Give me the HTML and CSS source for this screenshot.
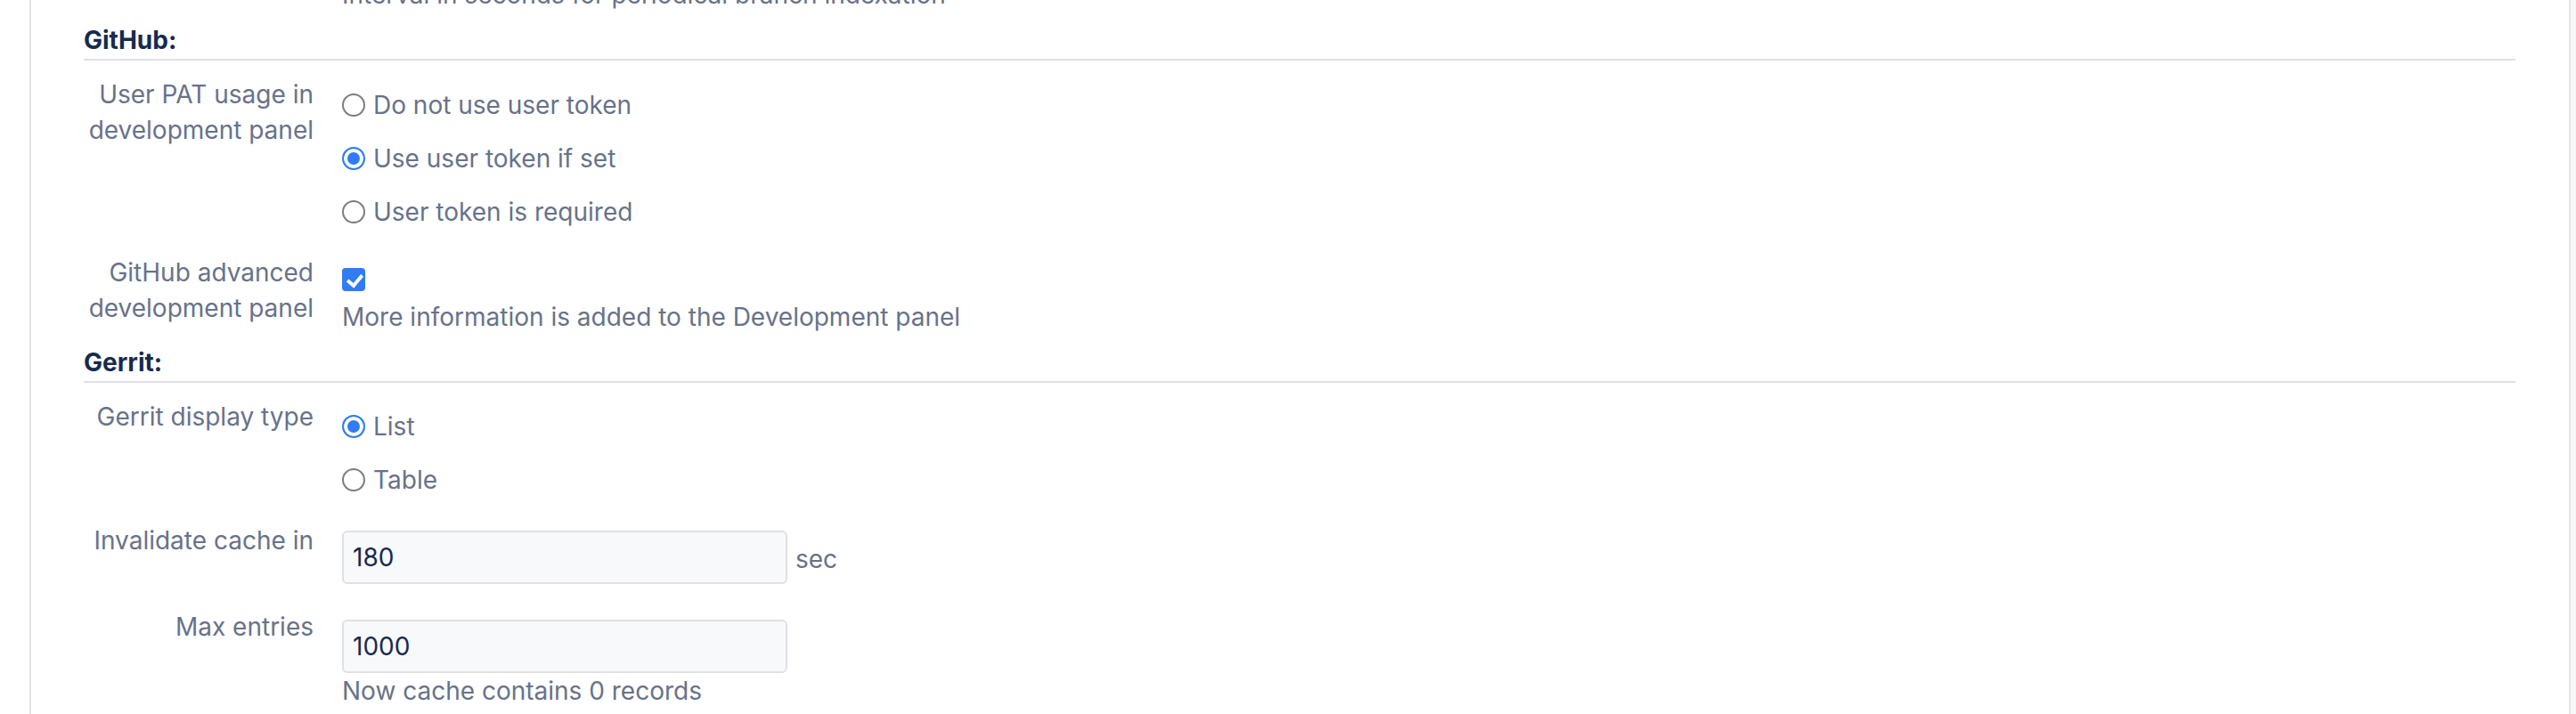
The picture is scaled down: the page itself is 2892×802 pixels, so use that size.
FILE: index.html
```html
<!DOCTYPE html>
<html lang="en">
<head>
<meta charset="utf-8">
<title>Settings</title>
<link rel="stylesheet" href="styles.css">
</head>
<body>
<div class="app">
  <div class="gutter"></div>
  <main class="panel">
    <div class="content">
      <div class="row row-first">
        <div class="label"></div>
        <div class="field"><div class="desc">Interval in seconds for periodical branch indexation</div></div>
      </div>

      <h3 class="section">GitHub:</h3>

      <div class="row">
        <div class="label">User PAT usage in development panel</div>
        <div class="field field-radios">
          <label class="radio"><input type="radio" name="pat"><span>Do not use user token</span></label>
          <label class="radio"><input type="radio" name="pat" checked><span>Use user token if set</span></label>
          <label class="radio"><input type="radio" name="pat"><span>User token is required</span></label>
        </div>
      </div>

      <div class="row">
        <div class="label">GitHub advanced development panel</div>
        <div class="field field-check">
          <div class="check-line"><input type="checkbox" class="checkbox" checked></div>
          <div class="desc desc-check">More information is added to the Development panel</div>
        </div>
      </div>

      <h3 class="section">Gerrit:</h3>

      <div class="row">
        <div class="label">Gerrit display type</div>
        <div class="field field-radios field-radios-b">
          <label class="radio"><input type="radio" name="gdt" checked><span>List</span></label>
          <label class="radio"><input type="radio" name="gdt"><span>Table</span></label>
        </div>
      </div>

      <div class="row row-input">
        <div class="label">Invalidate cache in</div>
        <div class="field field-input">
          <div class="input-line"><input class="text" type="text" value="180"><span class="unit">sec</span></div>
        </div>
      </div>

      <div class="row row-input2">
        <div class="label">Max entries</div>
        <div class="field field-input field-input2">
          <div class="input-line"><input class="text" type="text" value="1000"></div>
          <div class="desc">Now cache contains 0 records</div>
        </div>
      </div>
    </div>
  </main>
  <div class="scrollstrip"></div>
</div>
</body>
</html>
```

FILE: styles.css
```css
* { box-sizing: border-box; }

html, body {
  margin: 0;
  padding: 0;
  background: #ffffff;
}

body {
  font-family: Inter, "Noto Sans", "Liberation Sans", sans-serif;
  font-size: 28px;
  line-height: 40px;
  color: #67728a;
  overflow: hidden;
}

.app {
  display: flex;
  min-height: 100vh;
}

.gutter {
  width: 33px;
  flex: none;
}

.panel {
  flex: 1;
  border-left: 2px solid #e4e4e8;
  border-right: 2px solid #e4e4e8;
  padding: 0 60px 0 59px;
  overflow: hidden;
}

.scrollstrip {
  width: 6px;
  flex: none;
  background: #f7f7f8;
}

.content {
  margin-top: -26px;
}

.section {
  margin: 11px 0 18px;
  padding-bottom: 1px;
  border-bottom: 2px solid #e1e1e7;
  font-size: 28px;
  line-height: 40px;
  font-weight: 700;
  color: #172b4d;
}

.row {
  display: flex;
  margin-top: 28px;
}

.row-first { margin-top: 0; }

.section + .row { margin-top: 0; }

.label {
  width: 258px;
  flex: none;
  text-align: right;
  color: #67728a;
}

.field {
  padding-left: 32px;
  flex: 1;
  min-width: 0;
}

.desc {
  color: #67728a;
  white-space: nowrap;
}

.field-radios {
  padding-top: 12px;
  display: flex;
  flex-direction: column;
  gap: 20px;
}

.field-radios-b { padding-top: 11px; }

.radio {
  display: flex;
  align-items: center;
  height: 40px;
  gap: 9px;
  color: #67728a;
}

.radio input {
  appearance: none;
  -webkit-appearance: none;
  margin: 0;
  width: 26px;
  height: 26px;
  border-radius: 50%;
  border: 2px solid #7d7d7d;
  background: #ffffff;
  flex: none;
}

.radio input:checked {
  border-color: #2f7cf6;
  background: #2f7cf6;
  box-shadow: inset 0 0 0 4px #ffffff;
}

.field-check { padding-top: 8px; }

.check-line {
  height: 40px;
  display: flex;
  align-items: center;
}

.checkbox {
  appearance: none;
  -webkit-appearance: none;
  margin: 0;
  width: 26px;
  height: 26px;
  border-radius: 4px;
  background: #2f7cf6;
  position: relative;
}

.checkbox::after {
  content: "";
  position: absolute;
  left: 9px;
  top: 4px;
  width: 7px;
  height: 13px;
  border: solid #ffffff;
  border-width: 0 4px 4px 0;
  transform: rotate(40deg);
}

.desc-check { margin-top: 2px; }

.field-input { padding-top: 9px; }
.field-input2 { padding-top: 12px; }

.input-line {
  display: flex;
  align-items: center;
  gap: 9px;
}

.text {
  width: 500px;
  height: 60px;
  border: 2px solid #dfe1e6;
  border-radius: 6px;
  background: #f8f9fb;
  padding: 0 10px;
  font-family: inherit;
  font-size: 28px;
  color: #172b4d;
  margin: 0;
  outline: none;
}

.unit {
  color: #67728a;
  padding-top: 4px;
}
```
